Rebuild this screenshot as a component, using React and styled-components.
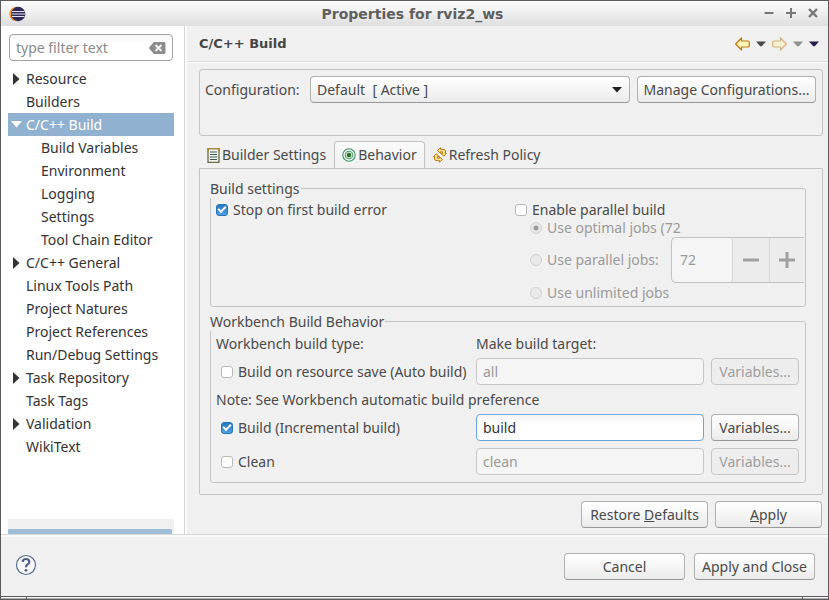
import React, { useState } from "react";
import styled, { createGlobalStyle, css } from "styled-components";

const GlobalStyle = createGlobalStyle`
  *, *::before, *::after { box-sizing: border-box; }
  body { margin: 0; background: #f0f0f0; }
  body, button, input, select {
    font-family: "Noto Sans", "Open Sans", sans-serif;
    font-size: 14px;
    line-height: 20px;
    color: #4a4a4a;
  }
`;

const Window = styled.div`
  min-height: 100vh;
  display: flex;
  flex-direction: column;
  border: 1px solid #5c5a5c;
  background: #f0f0f0;
  overflow: hidden;
`;

const TitleBar = styled.header`
  display: grid;
  grid-template-columns: 60px 1fr 64px;
  align-items: center;
  height: 25px;
  padding: 0 8px;
  background: linear-gradient(#fdfdfd, #dedede);
`;

const WindowTitle = styled.h1`
  margin: 0;
  font: bold 14px/20px "DejaVu Sans", sans-serif;
  color: #5f5f5f;
  text-align: center;
  white-space: nowrap;
`;

const WindowButtons = styled.div`
  display: flex;
  justify-content: flex-end;
  gap: 8px;
`;

const IconButton = styled.button`
  display: flex;
  align-items: center;
  justify-content: center;
  padding: 0;
  border: 0;
  background: none;
  svg { display: block; }
`;

const Body = styled.div`
  flex: 1;
  display: flex;
`;

const Sidebar = styled.nav`
  display: flex;
  flex-direction: column;
  width: 184px;
  flex: none;
  padding: 8px 10px 0 7px;
  background: #fff;
  border-right: 1px solid #d4d4d4;
`;

const FilterBox = styled.div`
  display: flex;
  align-items: center;
  height: 27px;
  margin: 0 1px;
  padding: 0 6px;
  border: 1px solid #a2a2a2;
  border-radius: 4px;
  background: linear-gradient(#f5f5f5, #fff 8px);
`;

const FilterInput = styled.input`
  flex: 1;
  min-width: 0;
  padding: 0;
  border: 0;
  outline: 0;
  background: none;
  &::placeholder { color: #8a8a8a; opacity: 1; }
`;

const Tree = styled.ul`
  flex: 1;
  margin: 6px 0 0;
  padding: 0;
  list-style: none;
`;

const TreeRow = styled.li`
  display: flex;
  align-items: center;
  height: 23px;
  padding-left: ${(p) => (p.$child ? 15 : 0)}px;
  white-space: nowrap;
  color: ${(p) => (p.$selected ? "#fff" : "#333")};
  background: ${(p) => (p.$selected ? "#90b1d0" : "none")};
`;

const TreeMark = styled.span`
  display: flex;
  width: 18px;
  padding-left: ${(p) => (p.$open ? 3 : 5)}px;
`;

const ScrollTrack = styled.div`
  height: 15px;
  padding: 10px 2px 0 0;
  background: #f0f0f0;
`;

const ScrollThumb = styled.div`
  height: 5px;
  border-radius: 1px;
  background: #a0bdd8;
`;

const Main = styled.main`
  flex: 1;
  min-width: 0;
  display: flex;
  flex-direction: column;
  border-left: 2px solid #fcfcfc;
`;

const PageHeader = styled.div`
  display: flex;
  align-items: center;
  justify-content: space-between;
  height: 37px;
  padding: 0 9px 0 12px;
  border-bottom: 1px solid #fafafa;
  box-shadow: inset 0 -1px #dcdcdc;
`;

const PageTitle = styled.h2`
  margin: 0;
  font: bold 13px/20px "DejaVu Sans", sans-serif;
  color: #454545;
`;

const NavTools = styled.div`
  display: flex;
  align-items: center;
  gap: 6px;
`;

const PageContent = styled.div`
  flex: 1;
  padding: 6px 5px 6px 12px;
`;

const ConfigPanel = styled.section`
  display: flex;
  align-items: flex-start;
  gap: 7px;
  height: 67px;
  padding: 6px 6px 0 5px;
  border: 1px solid #c4c4c4;
  border-radius: 3px;
`;

const ConfigLabel = styled.label`
  width: 98px;
  line-height: 27px;
  white-space: nowrap;
`;

const SelectWrap = styled.div`
  position: relative;
  flex: 1;
  min-width: 0;
`;

const SelectArrow = styled.svg`
  position: absolute;
  right: 8px;
  top: 11px;
  pointer-events: none;
`;

const raised = css`
  height: 27px;
  border: 1px solid #b0b0b0;
  border-bottom-color: #979797;
  border-radius: 4px;
  background: linear-gradient(#fff, #ebebeb);
`;

const Select = styled.select`
  ${raised}
  display: block;
  appearance: none;
  width: 100%;
  padding: 0 24px 0 6px;
  line-height: 24px;
`;

const Button = styled.button`
  ${raised}
  width: ${(p) => p.$width}px;
  padding: 0;
  text-align: center;
  white-space: nowrap;
  &:disabled {
    color: #9d9d9d;
    border-color: #c6c6c6;
    background: #ededed;
  }
`;

const Tabs = styled.div`
  display: flex;
  height: 27px;
  margin-top: 5px;
`;

const Tab = styled.button`
  display: flex;
  align-items: center;
  gap: 2px;
  padding: 0 7px;
  white-space: nowrap;
  border: 1px solid transparent;
  border-bottom: 0;
  border-radius: 4px 4px 0 0;
  background: none;
  ${(p) =>
    p["aria-selected"] &&
    css`
      border-color: #c0c0c0;
      background: linear-gradient(#fafafa, #f0f0f0);
    `}
`;

const TabPane = styled.section`
  display: flex;
  flex-direction: column;
  gap: 5px;
  padding: 10px 16px 11px 10px;
  border: 1px solid #c4c4c4;
  border-radius: 0 0 2px 2px;
`;

const Group = styled.fieldset`
  min-width: 0;
  margin: 0;
  padding: 0;
  border: 1px solid #c4c4c4;
  border-radius: 3px;
`;

const GroupTitle = styled.legend`
  margin-left: -1px;
  padding: 0 1px 0 0;
  line-height: 19px;
  background: #f0f0f0;
`;

const SettingsColumns = styled.div`
  display: grid;
  grid-template-columns: 1fr 290px;
  padding: 2px 0 3px 5px;
`;

const ParallelOptions = styled.div`
  display: flex;
  flex-direction: column;
  padding-left: 15px;
  overflow: hidden;
`;

const Choice = styled.label`
  display: flex;
  align-items: center;
  gap: 5px;
  height: ${(p) => p.$height || 20}px;
  width: ${(p) => (p.$width ? p.$width + "px" : "auto")};
  overflow: hidden;
  white-space: nowrap;
  color: ${(p) => (p.$muted ? "#9a9a9a" : "inherit")};
`;

const CheckBox = styled.input.attrs({ type: "checkbox" })`
  appearance: none;
  flex: none;
  width: 12px;
  height: 12px;
  margin: 0;
  border: 1px solid #b8b8b8;
  border-radius: 3px;
  background: #fff;
  &:checked {
    border-color: #2373b8;
    background: linear-gradient(#2879c2, #4f9fe0);
  }
  &:checked::after {
    content: "";
    display: block;
    width: 8px;
    height: 5px;
    margin: 1px;
    border: solid #fff;
    border-width: 0 0 2px 2px;
    transform: rotate(-45deg);
  }
`;

const Radio = styled.input.attrs({ type: "radio" })`
  appearance: none;
  flex: none;
  width: 12px;
  height: 12px;
  margin: 0;
  border: 1px solid #cfcfcf;
  border-radius: 50%;
  background: #e9e9e9;
  &:checked { background: radial-gradient(circle, #9a9a9a 2px, #e9e9e9 3px); }
`;

const ParallelRow = styled.div`
  display: flex;
  align-items: center;
  justify-content: space-between;
  height: 46px;
`;

const Spinner = styled.div`
  display: grid;
  grid-template-columns: 60px 37px 1fr;
  width: 133px;
  height: 46px;
  margin-right: 1px;
  overflow: hidden;
  border: 1px solid #c2c2c2;
  border-right: 0;
  border-radius: 5px 0 0 5px;
  background: #ececec;
`;

const SpinnerInput = styled.input`
  min-width: 0;
  padding: 0 8px;
  border: 0;
  border-radius: 5px;
  background: #f5f5f5;
  color: #9a9a9a;
`;

const SpinnerButton = styled(IconButton)`
  border-left: 1px solid #d8d8d8;
`;

const BehaviorGrid = styled.div`
  display: grid;
  grid-template-columns: 253px 1fr 88px;
  gap: 7px;
  align-items: center;
  padding: 5px 6px 7px 5px;
`;

const Caption = styled.div`
  grid-column: ${(p) => p.$span || "auto"};
  line-height: 15px;
  white-space: nowrap;
`;

const IndentedChoice = styled(Choice)`
  padding-left: 5px;
`;

const TextField = styled.input`
  width: 100%;
  min-width: 0;
  height: 27px;
  padding: 0 6px;
  border: 1px solid #69a7dc;
  border-radius: 4px;
  outline: 0;
  color: #333;
  background: linear-gradient(#f5f5f5, #fff 10px);
  &:disabled {
    color: #9a9a9a;
    border-color: #c6c6c6;
    background: #f5f5f5;
  }
`;

const PageActions = styled.div`
  display: flex;
  justify-content: flex-end;
  gap: 7px;
  margin: 6px 1px 0 0;
`;

const Footer = styled.footer`
  display: flex;
  align-items: center;
  gap: 9px;
  height: 62px;
  padding: 2px 13px 0 14px;
  border-top: 1px solid #d6d6d6;
  box-shadow: inset 0 2px #f9f9f9;
`;

const HelpButton = styled(IconButton)`
  margin-right: auto;
  padding-bottom: 4px;
`;

const BottomEdge = styled.div`
  display: flex;
  justify-content: space-between;
  height: 3px;
  padding: 0 25px;
  border-top: 1px solid #5c5a5c;
  background: linear-gradient(#f8f8f8 1px, #aaa 1px);
  &::before, &::after {
    content: "";
    width: 1px;
    background: #5c5a5c;
  }
`;

const Caret = ({ color }) => (
  <svg width="10" height="6" viewBox="0 0 10 6">
    <path d="M0 .5H10L5.8 5.2H4.2Z" fill={color} />
  </svg>
);

const ArrowShape = ({ forward }) => (
  <svg width="15" height="14" viewBox="0 0 15 14" opacity={forward ? 0.5 : 1}>
    <path
      d={
        forward
          ? "M14.400 7 8.500 1V4H2Q.7 4 .7 5.300V8.700Q.7 10 2 10H8.500V13Z"
          : "M.6 7 6.500 1V4H13Q14.300 4 14.300 5.300V8.700Q14.300 10 13 10H6.500V13Z"
      }
      fill="#fff3b8"
      stroke="#b87a10"
      strokeWidth="1.2"
      strokeLinejoin="round"
    />
  </svg>
);

const EclipseIcon = () => (
  <svg width="17" height="16" viewBox="0 0 17 16">
    <circle cx="7.600" cy="8" r="7.300" fill="#f09a32" />
    <circle cx="9.200" cy="8" r="7.200" fill="#2f2859" />
    <path d="M3 5.500H15.500M2.500 8H16M3 10.500H15.500" stroke="#e4e2f0" strokeWidth="1.200" />
  </svg>
);

const ClearIcon = () => (
  <svg width="17" height="12" viewBox="0 0 17 12">
    <path d="M5 0H15Q16.500 0 16.500 1.500V10.500Q16.500 12 15 12H5L.5 7Q0 6 .5 5Z" fill="#8c8c8c" />
    <path d="M6.500 3 12.500 9M12.500 3 6.500 9" stroke="#fff" strokeWidth="1.800" />
  </svg>
);

const BuilderIcon = () => (
  <svg width="13" height="15" viewBox="0 0 13 15">
    <path d="M1 .7H12V14.300H1Z" fill="#f4f6ee" stroke="#6b6a48" strokeWidth="1.300" />
    <path d="M1 4V.7H12V4" fill="none" stroke="#a88b3c" strokeWidth="1.300" />
    <path d="M3 4H10M3 6.500H10M3 9H10M3 11.500H10" stroke="#41595c" strokeWidth="1.200" />
  </svg>
);

const BehaviorIcon = () => (
  <svg width="14" height="14" viewBox="0 0 14 14">
    <circle cx="7" cy="7" r="6.200" fill="#f4faf6" stroke="#3c9462" strokeWidth="1.100" />
    <circle cx="7" cy="7" r="3.800" fill="#d5ecd9" stroke="#4a9c6c" />
    <circle cx="7" cy="7" r="2.200" fill="#2b6b2a" />
  </svg>
);

const RefreshIcon = () => (
  <svg width="14" height="16" viewBox="0 0 14 16">
    <g fill="#ffe28a" stroke="#b87a10" strokeLinejoin="round">
      <path d="M7.500.8 4.500 3.500 7.500 6.300V4.800H9.500V6.500H8L10.800 9.300 13.500 6.500H12.500V4Q12.300 2.300 10 2.300H7.500Z" />
      <path d="M6.500 15.200 9.500 12.500 6.500 9.700V11.200H4.500V9.500H6L3.200 6.700.5 9.500H1.500V12Q1.700 13.700 4 13.700H6.500Z" />
    </g>
  </svg>
);

const HelpIcon = () => (
  <svg width="22" height="22" viewBox="0 0 22 22">
    <circle cx="11" cy="11" r="9.500" fill="#f7f7f9" stroke="#5b6c92" strokeWidth="1.200" />
    <path
      d="M7.600 7.800Q7.800 5 11 5T14.300 7.800Q14.300 9.400 12.600 10.400T11 13.200"
      fill="none"
      stroke="#4c5f8a"
      strokeWidth="2.200"
    />
    <circle cx="11" cy="16.300" r="1.400" fill="#4c5f8a" />
  </svg>
);

const TREE = [
  { label: "Resource", mark: "closed" },
  { label: "Builders" },
  { label: "C/C++ Build", mark: "open", selected: true },
  { label: "Build Variables", child: true },
  { label: "Environment", child: true },
  { label: "Logging", child: true },
  { label: "Settings", child: true },
  { label: "Tool Chain Editor", child: true },
  { label: "C/C++ General", mark: "closed" },
  { label: "Linux Tools Path" },
  { label: "Project Natures" },
  { label: "Project References" },
  { label: "Run/Debug Settings" },
  { label: "Task Repository", mark: "closed" },
  { label: "Task Tags" },
  { label: "Validation", mark: "closed" },
  { label: "WikiText" },
];

const TABS = [
  { label: "Builder Settings", Icon: BuilderIcon },
  { label: "Behavior", Icon: BehaviorIcon },
  { label: "Refresh Policy", Icon: RefreshIcon },
];

function TargetRow({ label, target, initial = false }) {
  const [on, setOn] = useState(initial);
  const [value, setValue] = useState(target);
  return (
    <>
      <IndentedChoice>
        <CheckBox checked={on} onChange={(e) => setOn(e.target.checked)} />
        {label}
      </IndentedChoice>
      <TextField
        aria-label={`${label} target`}
        value={value}
        disabled={!on}
        onChange={(e) => setValue(e.target.value)}
      />
      <Button $width={88} disabled={!on}>Variables...</Button>
    </>
  );
}

export default function App() {
  return (
    <Window>
      <GlobalStyle />
      <TitleBar>
        <EclipseIcon />
        <WindowTitle>Properties for rviz2_ws</WindowTitle>
        <WindowButtons>
          <IconButton aria-label="Minimize">
            <svg width="14" height="14"><path d="M2.500 6H11.500" stroke="#777" strokeWidth="2" /></svg>
          </IconButton>
          <IconButton aria-label="Maximize">
            <svg width="14" height="14"><path d="M2 6H12M7 1V11" stroke="#777" strokeWidth="2" /></svg>
          </IconButton>
          <IconButton aria-label="Close">
            <svg width="14" height="14"><path d="M3 2 11 10M11 2 3 10" stroke="#777" strokeWidth="2.400" /></svg>
          </IconButton>
        </WindowButtons>
      </TitleBar>

      <Body>
        <Sidebar>
          <FilterBox>
            <FilterInput aria-label="Filter" placeholder="type filter text" />
            <IconButton aria-label="Clear filter"><ClearIcon /></IconButton>
          </FilterBox>
          <Tree>
            {TREE.map((item) => (
              <TreeRow key={item.label} $child={item.child} $selected={item.selected}>
                <TreeMark $open={item.mark === "open"}>
                  {item.mark === "closed" && (
                    <svg width="7" height="12"><path d="M0 0 6.500 6 0 12Z" fill="#333" /></svg>
                  )}
                  {item.mark === "open" && (
                    <svg width="12" height="7"><path d="M0 0H11L5.500 6.500Z" fill="#fff" /></svg>
                  )}
                </TreeMark>
                {item.label}
              </TreeRow>
            ))}
          </Tree>
          <ScrollTrack><ScrollThumb /></ScrollTrack>
        </Sidebar>

        <Main>
          <PageHeader>
            <PageTitle>C/C++ Build</PageTitle>
            <NavTools>
              <IconButton aria-label="Back"><ArrowShape /></IconButton>
              <IconButton aria-label="Back history"><Caret color="#4a4a4a" /></IconButton>
              <IconButton aria-label="Forward"><ArrowShape forward /></IconButton>
              <IconButton aria-label="Forward history"><Caret color="#909090" /></IconButton>
              <IconButton aria-label="View menu"><Caret color="#2b1a4d" /></IconButton>
            </NavTools>
          </PageHeader>

          <PageContent>
            <ConfigPanel>
              <ConfigLabel htmlFor="configuration">Configuration:</ConfigLabel>
              <SelectWrap>
                <Select id="configuration">
                  <option>{"Default\u00a0 [ Active ]"}</option>
                </Select>
                <SelectArrow width="10" height="6" viewBox="0 0 10 6">
                  <path d="M0 0H10L5 5.500Z" fill="#222" />
                </SelectArrow>
              </SelectWrap>
              <Button $width={179}>Manage Configurations...</Button>
            </ConfigPanel>

            <Tabs role="tablist">
              {TABS.map(({ label, Icon }) => (
                <Tab key={label} role="tab" aria-selected={label === "Behavior"}>
                  <Icon />
                  {label}
                </Tab>
              ))}
            </Tabs>

            <TabPane>
              <Group>
                <GroupTitle>Build settings</GroupTitle>
                <SettingsColumns>
                  <Choice><CheckBox defaultChecked />Stop on first build error</Choice>
                  <div>
                    <Choice $height={19}><CheckBox />Enable parallel build</Choice>
                    <ParallelOptions>
                      <Choice $muted $height={18} $width={151}>
                        <Radio name="jobs" disabled defaultChecked />Use optimal jobs (72)
                      </Choice>
                      <ParallelRow>
                        <Choice $muted><Radio name="jobs" disabled />Use parallel jobs:</Choice>
                        <Spinner>
                          <SpinnerInput aria-label="Parallel jobs" defaultValue="72" disabled />
                          <SpinnerButton aria-label="Decrease" disabled>
                            <svg width="16" height="16"><path d="M0 8H16" stroke="#a0a0a0" strokeWidth="3" /></svg>
                          </SpinnerButton>
                          <SpinnerButton aria-label="Increase" disabled>
                            <svg width="16" height="16"><path d="M0 8H16M8 0V16" stroke="#a0a0a0" strokeWidth="3" /></svg>
                          </SpinnerButton>
                        </Spinner>
                      </ParallelRow>
                      <Choice $muted><Radio name="jobs" disabled />Use unlimited jobs</Choice>
                    </ParallelOptions>
                  </div>
                </SettingsColumns>
              </Group>

              <Group>
                <GroupTitle>Workbench Build Behavior</GroupTitle>
                <BehaviorGrid>
                  <Caption>Workbench build type:</Caption>
                  <Caption $span="2 / -1">Make build target:</Caption>
                  <TargetRow label="Build on resource save (Auto build)" target="all" />
                  <Caption $span="1 / -1">Note: See Workbench automatic build preference</Caption>
                  <TargetRow label="Build (Incremental build)" target="build" initial />
                  <TargetRow label="Clean" target="clean" />
                </BehaviorGrid>
              </Group>
            </TabPane>

            <PageActions>
              <Button $width={127}>Restore <u>D</u>efaults</Button>
              <Button $width={107}><u>A</u>pply</Button>
            </PageActions>
          </PageContent>
        </Main>
      </Body>

      <Footer>
        <HelpButton aria-label="Help"><HelpIcon /></HelpButton>
        <Button $width={121}>Cancel</Button>
        <Button $width={121}>Apply and Close</Button>
      </Footer>
      <BottomEdge />
    </Window>
  );
}
